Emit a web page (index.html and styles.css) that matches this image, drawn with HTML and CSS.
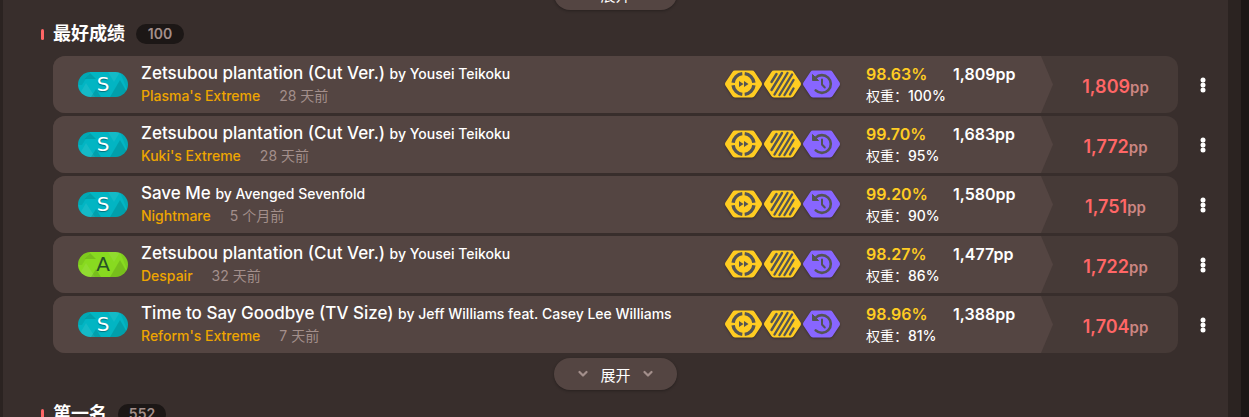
FILE: index.html
```html
<!DOCTYPE html>
<html lang="zh-CN">
<head>
    <meta charset="UTF-8">
    <meta name="viewport" content="width=device-width, initial-scale=1.0">
    <title>最好成绩</title>
    <link rel="stylesheet" href="styles.css">
</head>
<body>
    <!-- Shared icons -->
    <svg class="icon-defs" aria-hidden="true">
        <symbol id="rank-shapes" viewBox="0 0 50 25">
            <path d="M0 0h12l-8 13H0z" fill="#000" opacity=".07"/>
            <path d="M12 1l6 6H7z" fill="#000" opacity=".12"/>
            <path d="M0 25l8-14 9 14z" fill="#fff" opacity=".08"/>
            <path d="M18 17l5 8H13z" fill="#000" opacity=".12"/>
            <path d="M30 0h12l-6 10z" fill="#fff" opacity=".07"/>
            <path d="M42 8l8 14-4 3H32z" fill="#000" opacity=".12"/>
            <path d="M42 0h8v20z" fill="#000" opacity=".06"/>
        </symbol>
        <symbol id="mod-nightcore" viewBox="0 0 39 28">
            <path d="M11 .5h17q1.700 0 2.600 1.400l7 10.700q.9 1.400 0 2.800l-7 10.700q-.9 1.400-2.600 1.400h-17q-1.700 0-2.600-1.400l-7-10.700q-.9-1.400 0-2.800l7-10.700q.9-1.400 2.600-1.400z" fill="#fc2"/>
            <path d="M20.700 3.600a10.400 10.400 0 0 1 9.200 9.200M29.900 15.200a10.400 10.400 0 0 1-9.200 9.200M18.300 24.400a10.400 10.400 0 0 1-9.200-9.200M9.100 12.800a10.400 10.400 0 0 1 9.200-9.200" fill="none" stroke="#545454" stroke-width="3.400"/>
            <path d="M15 11l4.500 3-4.500 3zM20 11l4.500 3-4.500 3z" fill="#545454"/>
        </symbol>
        <symbol id="mod-hidden" viewBox="0 0 39 28">
            <path d="M11 .5h17q1.700 0 2.600 1.400l7 10.700q.9 1.400 0 2.800l-7 10.700q-.9 1.400-2.600 1.400h-17q-1.700 0-2.600-1.400l-7-10.700q-.9-1.400 0-2.800l7-10.700q.9-1.400 2.600-1.400z" fill="#fc2"/>
            <path d="M8.500 12l5-8M8.500 20l10.500-17M11.500 24.500l13-21.500M16.500 25l12.500-20.500M21.500 25l9-15M27 24.500l3.500-6" fill="none" stroke="#545454" stroke-width="2.400" stroke-linecap="round"/>
        </symbol>
        <symbol id="mod-classic" viewBox="0 0 39 28">
            <path d="M11 .5h17q1.700 0 2.600 1.400l7 10.700q.9 1.400 0 2.800l-7 10.700q-.9 1.400-2.600 1.400h-17q-1.700 0-2.600-1.400l-7-10.700q-.9-1.400 0-2.800l7-10.700q.9-1.400 2.600-1.400z" fill="#86f"/>
            <path d="M13.500 7.800a8.900 8.900 0 1 1 .2 12.600" fill="none" stroke="#545454" stroke-width="2.600" stroke-linecap="round"/>
            <path d="M10.500 4.500v6h6z" fill="#545454" stroke="#545454" stroke-linejoin="round"/>
            <path d="M20 9.500v5l2.800 3" fill="none" stroke="#545454" stroke-width="2" stroke-linecap="round" stroke-linejoin="round"/>
        </symbol>
        <symbol id="chevron" viewBox="0 0 10 8">
            <path d="M1.500 2l3.500 3.500 3.500-3.500" fill="none" stroke="currentColor" stroke-width="2.200" stroke-linecap="round" stroke-linejoin="round"/>
        </symbol>
        <symbol id="dots" viewBox="0 0 6 16">
            <circle cx="3" cy="3" r="2.500"/><circle cx="3" cy="8" r="2.500"/><circle cx="3" cy="13" r="2.500"/>
        </symbol>
    </svg>

    <main class="page">
        <button type="button" class="show-more show-more-top">
            <svg><use href="#chevron"/></svg>展开<svg><use href="#chevron"/></svg>
        </button>

        <h2 class="section-title">最好成绩 <span class="count">100</span></h2>

        <div class="play-list">
            <div class="play">
                <div class="play-card">
                    <div class="play-main">
                        <div class="rank rank-s"><svg><use href="#rank-shapes"/></svg><span>S</span></div>
                        <div class="play-detail">
                            <a href="#" class="play-title">Zetsubou plantation (Cut Ver.) <small>by Yousei Teikoku</small></a>
                            <div class="play-info"><span class="version">Plasma's Extreme</span><span class="time">28 天前</span></div>
                        </div>
                        <div class="mods">
                            <svg><use href="#mod-nightcore"/></svg><svg><use href="#mod-hidden"/></svg><svg><use href="#mod-classic"/></svg>
                        </div>
                        <div class="stats">
                            <span class="accuracy">98.63%</span><span class="weighted">1,809pp</span>
                            <span class="weight">权重：<b>100%</b></span>
                        </div>
                    </div>
                    <div class="play-pp">1,809<span>pp</span></div>
                </div>
                <button type="button" class="menu" aria-label="菜单"><svg><use href="#dots"/></svg></button>
            </div>

            <div class="play">
                <div class="play-card">
                    <div class="play-main">
                        <div class="rank rank-s"><svg><use href="#rank-shapes"/></svg><span>S</span></div>
                        <div class="play-detail">
                            <a href="#" class="play-title">Zetsubou plantation (Cut Ver.) <small>by Yousei Teikoku</small></a>
                            <div class="play-info"><span class="version">Kuki's Extreme</span><span class="time">28 天前</span></div>
                        </div>
                        <div class="mods">
                            <svg><use href="#mod-nightcore"/></svg><svg><use href="#mod-hidden"/></svg><svg><use href="#mod-classic"/></svg>
                        </div>
                        <div class="stats">
                            <span class="accuracy">99.70%</span><span class="weighted">1,683pp</span>
                            <span class="weight">权重：<b>95%</b></span>
                        </div>
                    </div>
                    <div class="play-pp">1,772<span>pp</span></div>
                </div>
                <button type="button" class="menu" aria-label="菜单"><svg><use href="#dots"/></svg></button>
            </div>

            <div class="play">
                <div class="play-card">
                    <div class="play-main">
                        <div class="rank rank-s"><svg><use href="#rank-shapes"/></svg><span>S</span></div>
                        <div class="play-detail">
                            <a href="#" class="play-title">Save Me <small>by Avenged Sevenfold</small></a>
                            <div class="play-info"><span class="version">Nightmare</span><span class="time">5 个月前</span></div>
                        </div>
                        <div class="mods">
                            <svg><use href="#mod-nightcore"/></svg><svg><use href="#mod-hidden"/></svg><svg><use href="#mod-classic"/></svg>
                        </div>
                        <div class="stats">
                            <span class="accuracy">99.20%</span><span class="weighted">1,580pp</span>
                            <span class="weight">权重：<b>90%</b></span>
                        </div>
                    </div>
                    <div class="play-pp">1,751<span>pp</span></div>
                </div>
                <button type="button" class="menu" aria-label="菜单"><svg><use href="#dots"/></svg></button>
            </div>

            <div class="play">
                <div class="play-card">
                    <div class="play-main">
                        <div class="rank rank-a"><svg><use href="#rank-shapes"/></svg><span>A</span></div>
                        <div class="play-detail">
                            <a href="#" class="play-title">Zetsubou plantation (Cut Ver.) <small>by Yousei Teikoku</small></a>
                            <div class="play-info"><span class="version">Despair</span><span class="time">32 天前</span></div>
                        </div>
                        <div class="mods">
                            <svg><use href="#mod-nightcore"/></svg><svg><use href="#mod-hidden"/></svg><svg><use href="#mod-classic"/></svg>
                        </div>
                        <div class="stats">
                            <span class="accuracy">98.27%</span><span class="weighted">1,477pp</span>
                            <span class="weight">权重：<b>86%</b></span>
                        </div>
                    </div>
                    <div class="play-pp">1,722<span>pp</span></div>
                </div>
                <button type="button" class="menu" aria-label="菜单"><svg><use href="#dots"/></svg></button>
            </div>

            <div class="play">
                <div class="play-card">
                    <div class="play-main">
                        <div class="rank rank-s"><svg><use href="#rank-shapes"/></svg><span>S</span></div>
                        <div class="play-detail">
                            <a href="#" class="play-title">Time to Say Goodbye (TV Size) <small>by Jeff Williams feat. Casey Lee Williams</small></a>
                            <div class="play-info"><span class="version">Reform's Extreme</span><span class="time">7 天前</span></div>
                        </div>
                        <div class="mods">
                            <svg><use href="#mod-nightcore"/></svg><svg><use href="#mod-hidden"/></svg><svg><use href="#mod-classic"/></svg>
                        </div>
                        <div class="stats">
                            <span class="accuracy">98.96%</span><span class="weighted">1,388pp</span>
                            <span class="weight">权重：<b>81%</b></span>
                        </div>
                    </div>
                    <div class="play-pp">1,704<span>pp</span></div>
                </div>
                <button type="button" class="menu" aria-label="菜单"><svg><use href="#dots"/></svg></button>
            </div>
        </div>

        <button type="button" class="show-more">
            <svg><use href="#chevron"/></svg>展开<svg><use href="#chevron"/></svg>
        </button>

        <h2 class="section-title">第一名 <span class="count">552</span></h2>
    </main>
</body>
</html>
```
FILE: styles.css
```css
* {
    box-sizing: border-box;
}

body {
    display: flex;
    height: 100vh;
    margin: 0;
    padding-right: 8px;
    overflow: hidden;
    background-color: #1c1716;
    color: #fff;
    font-family: Inter, "Noto Sans CJK SC", sans-serif;
    font-size: 14px;
}

button {
    border: none;
    color: inherit;
    font: inherit;
    cursor: pointer;
}

a {
    color: inherit;
    text-decoration: none;
}

.icon-defs {
    position: absolute;
    width: 0;
    height: 0;
}

.page {
    flex: 1;
    display: flex;
    flex-direction: column;
    height: max-content;
    padding-left: 38px;
    border-left: 3px solid #2b2321;
    border-right: 13px solid #2b2321;
    background-color: #382e2c;
}

.section-title {
    display: flex;
    align-items: center;
    margin: 14px 0 12px;
    font-size: 18px;
    line-height: 20px;
}

.section-title::before {
    content: "";
    width: 3px;
    height: 11px;
    margin-right: 9px;
    border-radius: 2px;
    background-color: #f66;
}

.count {
    min-width: 48px;
    margin-left: 11px;
    border-radius: 10px;
    background-color: #1c1716;
    color: #a38f8b;
    font-size: 14px;
    font-weight: 600;
    line-height: 20px;
    text-align: center;
}

.play-list {
    display: flex;
    flex-direction: column;
    gap: 3px;
    padding-left: 12px;
}

.play {
    display: flex;
}

.play-card {
    flex: 1;
    display: flex;
    border-radius: 12px;
    overflow: hidden;
    background-color: #463a37;
}

.play-main {
    flex: 1;
    display: flex;
    align-items: center;
    min-height: 57px;
    padding-left: 25px;
    background-color: #544542;
    clip-path: polygon(0 0, calc(100% - 12px) 0, 100% 50%, calc(100% - 12px) 100%, 0 100%);
}

.rank {
    display: grid;
    width: 50px;
    height: 25px;
    margin-right: 13px;
    border-radius: 13px;
    overflow: hidden;
    font-family: "DejaVu Sans", sans-serif;
    font-size: 20px;
    line-height: 25px;
    text-align: center;
}

.rank > * {
    grid-area: 1 / 1;
    width: 50px;
    height: 25px;
}

.rank-s {
    background-color: #02b5c3;
    color: #fff;
    text-shadow: 0 1px 1px #00707a;
}

.rank-a {
    background-color: #88da20;
    color: #275227;
}

.play-detail {
    flex: 1;
    min-width: 0;
}

.play-title {
    display: block;
    overflow: hidden;
    font-size: 17px;
    font-weight: 500;
    line-height: 22px;
    white-space: nowrap;
}

.play-title small {
    font-size: 14px;
}

.play-info {
    display: flex;
    gap: 19px;
    line-height: 22px;
}

.version {
    color: #eea500;
    font-weight: 500;
}

.time {
    color: #a38f8b;
}

.mods {
    display: flex;
    margin-right: 25px;
    padding-bottom: 2px;
}

.mods svg {
    width: 39px;
    height: 28px;
    filter: drop-shadow(0 1px 1px rgba(0, 0, 0, 0.3));
}

.stats {
    display: grid;
    grid-template-columns: 87px 100px;
    line-height: 21px;
}

.accuracy {
    color: #fc2;
    font-size: 16px;
    font-weight: 600;
}

.weighted {
    font-size: 16px;
    font-weight: 600;
}

.weight b {
    font-weight: 500;
}

.play-pp {
    width: 125px;
    padding-top: 2px;
    color: #f66;
    font-size: 18px;
    font-weight: 600;
    line-height: 57px;
    height: 57px;
    text-align: center;
}

.play-pp span {
    color: #cc8682;
    font-size: 15px;
}

.menu {
    width: 50px;
    padding: 0;
    background: none;
}

.menu svg {
    display: block;
    width: 6px;
    height: 16px;
    margin: 0 auto;
    fill: #fff;
}

.show-more {
    display: flex;
    align-items: center;
    justify-content: center;
    gap: 12px;
    align-self: center;
    width: 123px;
    height: 32px;
    margin: 5px 38px 0 0;
    border-radius: 16px;
    background-color: #544542;
    font-size: 15px;
    box-shadow: 0 1px 3px rgba(0, 0, 0, 0.3);
}

.show-more-top {
    margin-top: -22px;
}

.show-more svg {
    width: 10px;
    height: 8px;
    color: #a38f8b;
}
```
